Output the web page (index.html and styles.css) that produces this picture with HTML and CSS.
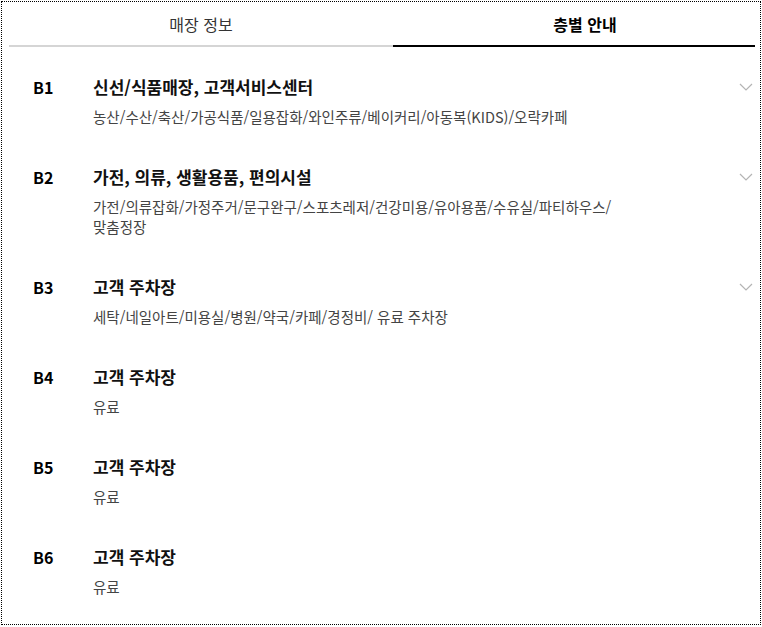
FILE: index.html
```html
<!DOCTYPE html>
<html lang="ko">
<head>
    <meta charset="UTF-8">
    <meta name="viewport" content="width=device-width, initial-scale=1.0">
    <title>층별 안내</title>
    <link rel="stylesheet" href="styles.css">
</head>
<body>
    <div class="frame">
        <div class="tabs">
            <div class="tab">매장 정보</div>
            <div class="tab active">층별 안내</div>
        </div>

        <ul class="floor-list">
            <li class="floor">
                <span class="floor-name">B1</span>
                <div class="floor-info">
                    <h3>신선/식품매장, 고객서비스센터</h3>
                    <p>농산/수산/축산/가공식품/일용잡화/와인주류/베이커리/아동복(KIDS)/오락카페</p>
                </div>
                <svg class="chevron" width="14" height="8" viewBox="0 0 14 8"><path d="M1 1l6 6 6-6" fill="none" stroke="#b4b4b4" stroke-width="1.2"/></svg>
            </li>
            <li class="floor">
                <span class="floor-name">B2</span>
                <div class="floor-info">
                    <h3>가전, 의류, 생활용품, 편의시설</h3>
                    <p class="wrap">가전/의류잡화/가정주거/문구완구/스포츠레저/건강미용/유아용품/수유실/파티하우스/<wbr>맞춤정장</p>
                </div>
                <svg class="chevron" width="14" height="8" viewBox="0 0 14 8"><path d="M1 1l6 6 6-6" fill="none" stroke="#b4b4b4" stroke-width="1.2"/></svg>
            </li>
            <li class="floor">
                <span class="floor-name">B3</span>
                <div class="floor-info">
                    <h3>고객 주차장</h3>
                    <p>세탁/네일아트/미용실/병원/약국/카페/경정비/ 유료 주차장</p>
                </div>
                <svg class="chevron" width="14" height="8" viewBox="0 0 14 8"><path d="M1 1l6 6 6-6" fill="none" stroke="#b4b4b4" stroke-width="1.2"/></svg>
            </li>
            <li class="floor">
                <span class="floor-name">B4</span>
                <div class="floor-info">
                    <h3>고객 주차장</h3>
                    <p>유료</p>
                </div>
            </li>
            <li class="floor">
                <span class="floor-name">B5</span>
                <div class="floor-info">
                    <h3>고객 주차장</h3>
                    <p>유료</p>
                </div>
            </li>
            <li class="floor">
                <span class="floor-name">B6</span>
                <div class="floor-info">
                    <h3>고객 주차장</h3>
                    <p>유료</p>
                </div>
            </li>
        </ul>
    </div>
</body>
</html>
```

FILE: styles.css
```css
body {
    margin: 0;
    padding: 1px;
    background: #fff;
    font-family: "Noto Sans CJK KR", "Noto Sans", sans-serif;
    color: #111;
}

.frame {
    width: 760px;
    height: 624px;
    box-sizing: border-box;
    border: 1px dotted #000;
    padding: 0 5px 0 7px;
}

.tabs {
    display: flex;
    overflow: hidden;
}

.tab {
    flex: 0 0 384px;
    height: 45px;
    line-height: 44px;
    text-align: center;
    font-size: 16px;
    color: #333;
    border-bottom: 2px solid #d5d5d5;
    box-sizing: border-box;
}

.tab.active {
    font-weight: bold;
    color: #000;
    border-bottom-color: #000;
}

.floor-list {
    list-style: none;
    margin: 0;
    padding: 0;
}

.floor {
    display: flex;
    align-items: flex-start;
    padding: 28px 2px 10px 24px;
}

.floor-name {
    flex: 0 0 60px;
    font-size: 16px;
    font-weight: bold;
    line-height: 24px;
    color: #000;
}

.floor-info {
    flex: 1;
}

.floor-info h3 {
    margin: 0;
    font-size: 17px;
    line-height: 24px;
    font-weight: bold;
    color: #111;
}

.floor-info p {
    margin: 8px 0 0;
    font-size: 14.5px;
    line-height: 20px;
    color: #444;
}

.floor-info p.wrap {
    max-width: 530px;
    word-break: keep-all;
}

.chevron {
    margin-top: 8px;
}
```
